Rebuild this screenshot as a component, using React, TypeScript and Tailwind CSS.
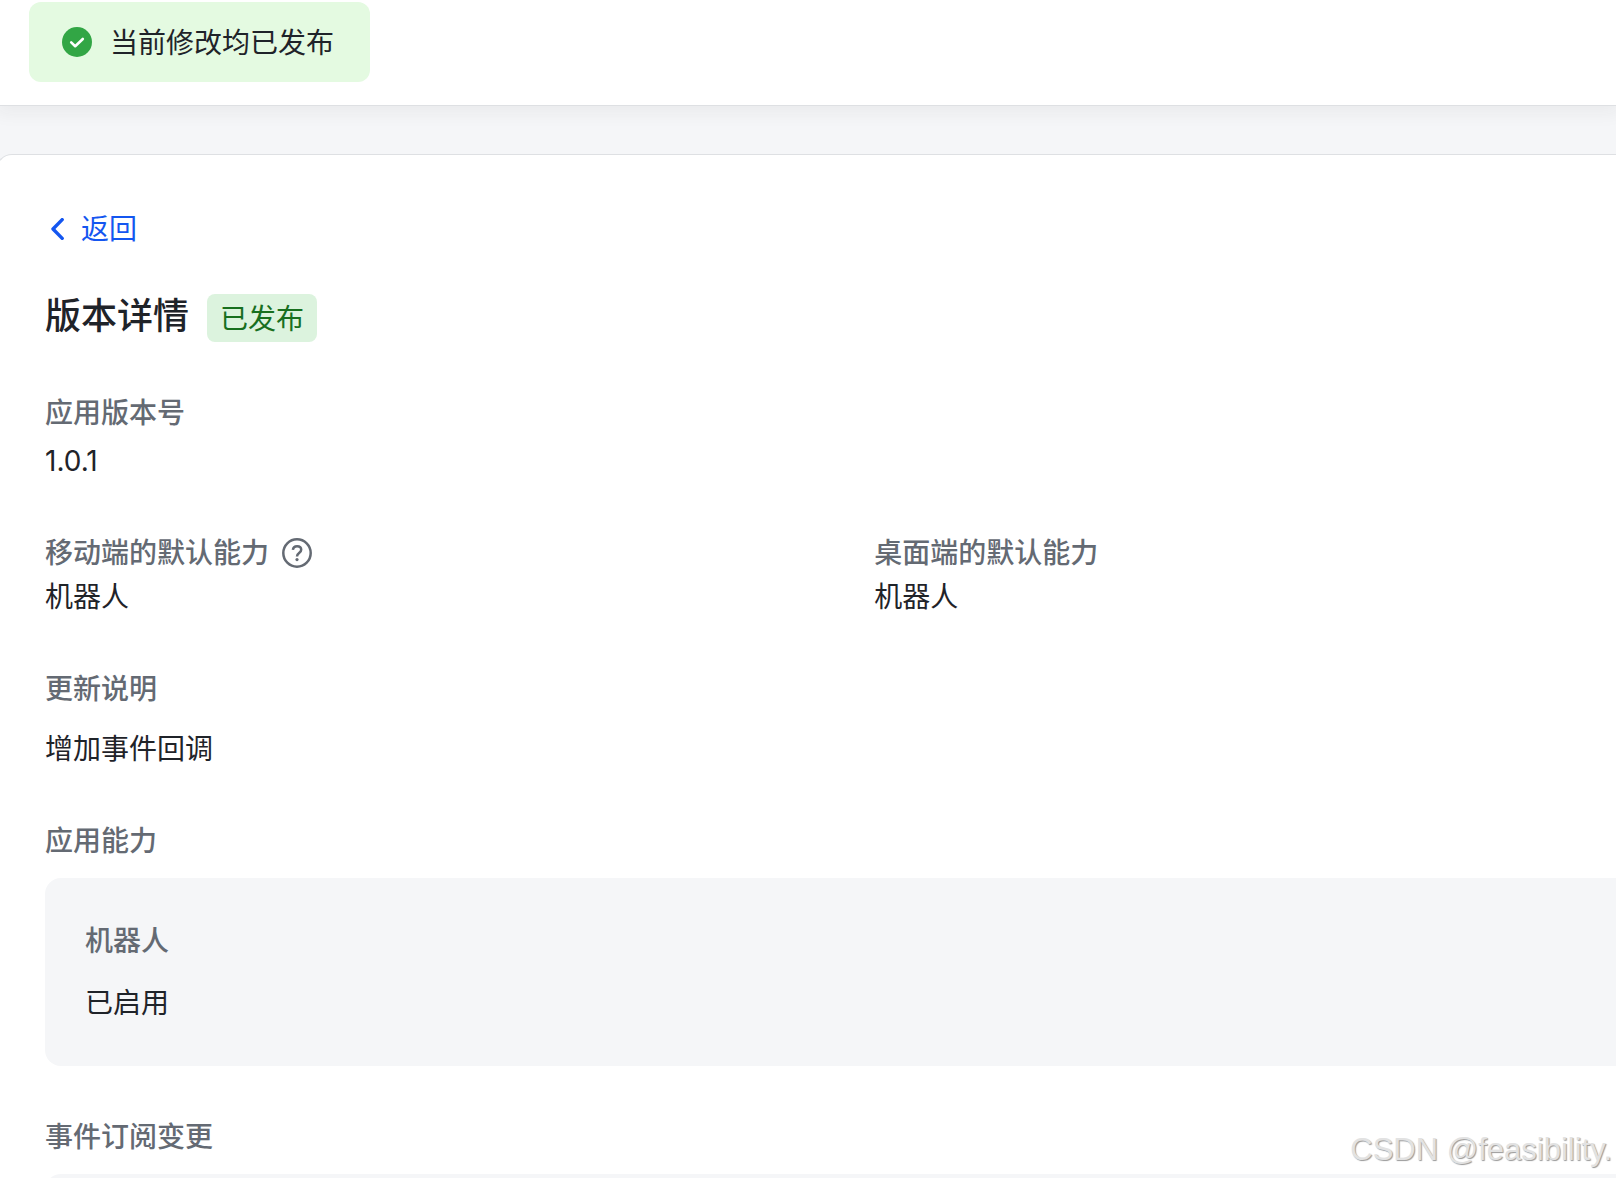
import type { ReactNode } from 'react'

function CheckCircle() {
  return (
    <svg width="30" height="30" viewBox="0 0 30 30" fill="none" aria-hidden="true">
      <circle cx="15" cy="15" r="15" fill="#32a645" />
      <path d="M9.2 15.4 13.2 19.2 20.8 12" stroke="#fff" strokeWidth="2.6" strokeLinecap="round" strokeLinejoin="round" />
    </svg>
  )
}

function HelpCircle() {
  return (
    <svg width="30" height="30" viewBox="0 0 30 30" fill="none" aria-hidden="true">
      <circle cx="15" cy="15" r="13.7" stroke="#646a73" strokeWidth="2.5" />
      <path
        d="M10.9 11.9c.2-2.2 1.9-3.7 4.2-3.7 2.4 0 4.1 1.5 4.1 3.6 0 3.4-4.2 3.2-4.2 6.6"
        stroke="#646a73"
        strokeWidth="2.5"
      />
      <circle cx="15" cy="21.6" r="1.6" fill="#646a73" />
    </svg>
  )
}

function Label({ children }: { children: ReactNode }) {
  return <h2 className="flex items-center gap-[13px] pt-0.5 text-[28px] leading-[42px] font-medium text-[#646a73]">{children}</h2>
}

function Value({ children }: { children: ReactNode }) {
  return <p className="pt-0.5 text-[28px] leading-[42px]">{children}</p>
}

export default function App() {
  return (
    <div className="relative flex h-screen flex-col overflow-hidden bg-[#f5f6f8] font-[Inter,'Noto_Sans_CJK_SC',sans-serif] text-[#1f2329]">
      <header className="shrink-0 border-b border-[#dee0e3] bg-white px-[29px] pt-0.5 pb-[23px] shadow-[0_4px_16px_4px_rgba(31,35,41,0.05)]">
        <div role="status" className="flex h-20 w-max items-center gap-[18px] rounded-xl bg-[#e4fae1] pr-9 pl-[33px] text-[28px] leading-[42px]">
          <CheckCircle />
          <span className="pt-0.5">当前修改均已发布</span>
        </div>
      </header>

      <main className="mt-12 -ml-1 grow rounded-tl-2xl border-t border-l border-[#dee0e3] bg-white pt-[52px] pl-12">
        <a href="#" className="flex w-max items-center gap-[17px] pl-1.5 text-[28px] leading-[44px] text-[#1456f0]">
          <svg width="13" height="22" viewBox="0 0 13 22" fill="none" aria-hidden="true">
            <path d="M11.2 1.6 2 11l9.2 9.4" stroke="currentColor" strokeWidth="3.4" strokeLinecap="round" strokeLinejoin="round" />
          </svg>
          返回
        </a>

        <div className="mt-[43px] flex items-start gap-[18px]">
          <h1 className="text-[36px] leading-[44px] font-medium">版本详情</h1>
          <span className="rounded-lg bg-[#dcf3de] px-[13px] pt-0.5 text-[28px] leading-[46px] text-[#186f1e]">已发布</span>
        </div>

        <section className="mt-12">
          <Label>应用版本号</Label>
          <div className="mt-1">
            <Value>1.0.1</Value>
          </div>
        </section>

        <div className="mt-12 grid grid-cols-[19fr_17fr]">
          <section>
            <Label>
              移动端的默认能力
              <button type="button" aria-label="帮助">
                <HelpCircle />
              </button>
            </Label>
            <Value>机器人</Value>
          </section>
          <section>
            <Label>桌面端的默认能力</Label>
            <Value>机器人</Value>
          </section>
        </div>

        <section className="mt-12 space-y-4">
          <Label>更新说明</Label>
          <Value>增加事件回调</Value>
        </section>

        <section className="mt-12 space-y-4">
          <Label>应用能力</Label>
          <div className="space-y-[18px] rounded-l-2xl bg-[#f5f6f8] px-10 pt-10 pb-[42px]">
            <Label>机器人</Label>
            <Value>已启用</Value>
          </div>
        </section>

        <section className="mt-12 space-y-4">
          <Label>事件订阅变更</Label>
          <div className="h-16 rounded-tl-2xl bg-[#f5f6f8]" />
        </section>
      </main>

      {/* 水印 */}
      <div className="absolute right-1 bottom-2.5 font-['Liberation_Sans',sans-serif] text-[31px] leading-[36px] text-[#e2e2e2] [text-shadow:1px_1px_1px_#999]">
        CSDN @feasibility.
      </div>
    </div>
  )
}
